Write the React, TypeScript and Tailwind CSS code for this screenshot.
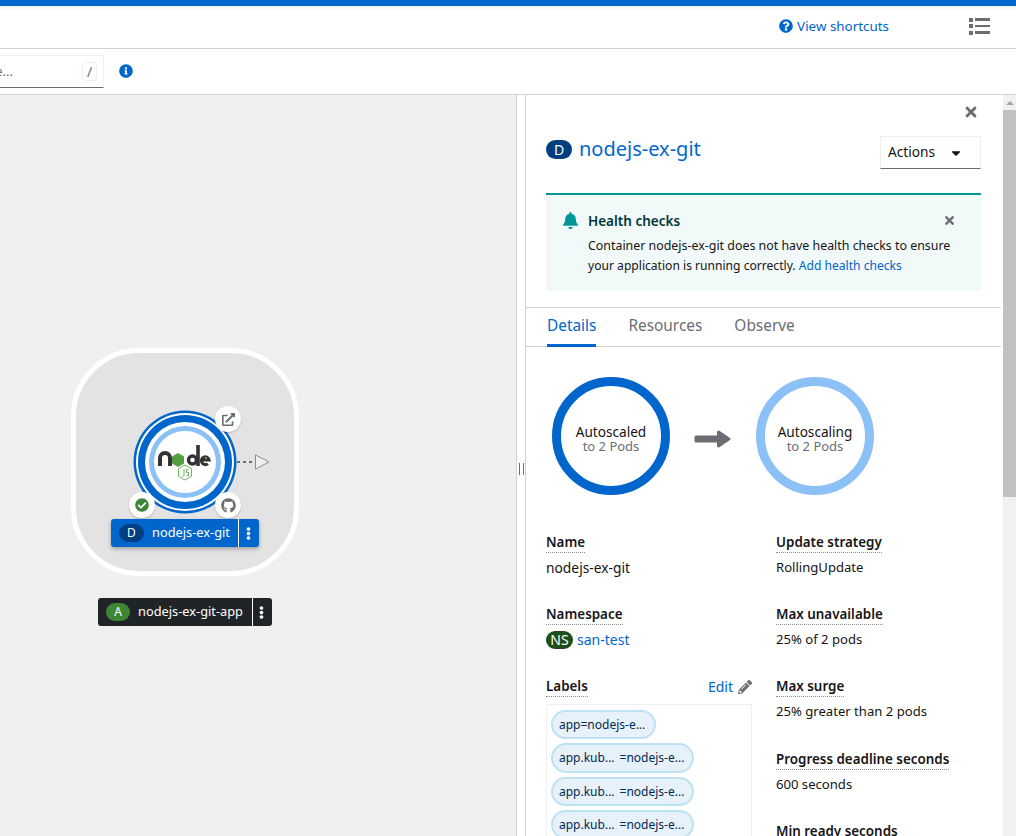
import { FaCheckCircle, FaExternalLinkAlt, FaGithub, FaInfoCircle, FaPencilAlt, FaQuestionCircle, FaTimes, FaBell, FaCaretDown, FaEllipsisV } from "react-icons/fa"

const font = "font-['Noto_Sans',sans-serif]"

const DotLabel = ({ children }: { children: string }) => (
  <div className="flex">
    <span className="text-[13.4px] leading-[19px] font-semibold text-[#151515] border-b border-dotted border-[#8a8d90]">{children}</span>
  </div>
)

const Field = ({ label, value, className, size }: { label: string; value: string; className: string; size: string }) => (
  <div className={className}>
    <DotLabel>{label}</DotLabel>
    <div className={`mt-[4px] leading-[21px] text-[#151515] ${size}`}>{value}</div>
  </div>
)

const Donut = ({ color, title, sub }: { color: string; title: string; sub: string }) => (
  <div className={`w-[118px] h-[118px] rounded-full border-[9px] ${color} flex flex-col items-center justify-center pt-[5px]`}>
    <div className="text-[13.6px] leading-[14px] text-[#151515]">{title}</div>
    <div className="text-[13px] leading-[14px] text-[#6a6e73]">{sub}</div>
  </div>
)

const Chip = ({ parts, className }: { parts: string[]; className: string }) => (
  <div className={`flex items-center gap-[5px] whitespace-nowrap rounded-full border-2 border-[#bee1f4] bg-[#e7f1fa] px-[6px] text-[12px] text-[#002952] ${className}`}>
    {parts.map((p) => <span key={p}>{p}</span>)}
  </div>
)

// node logo + rings, drawn once
const NodeIcon = () => (
  <svg width="108" height="108" viewBox="0 0 108 108">
    <circle cx="54" cy="54" r="51.5" fill="#06c" />
    <circle cx="54" cy="54" r="49" fill="#fff" />
    <circle cx="54" cy="54" r="47" fill="#06c" />
    <circle cx="54" cy="54" r="40" fill="#fff" />
    <circle cx="54" cy="54" r="36" fill="#8bc1f7" />
    <circle cx="54" cy="54" r="31" fill="#fff" />
    <path d="M29 58v-8a5 5 0 0 1 10 0v8" fill="none" stroke="#333" strokeWidth="4" />
    <polygon points="47,45 53,48.5 53,55.5 47,59 41,55.5 41,48.5" fill="#539e43" />
    <path d="M67 37v21" stroke="#333" strokeWidth="3.6" />
    <circle cx="61.5" cy="52" r="4" fill="none" stroke="#333" strokeWidth="3.4" />
    <path d="M71.5 52h6.5a3.8 3.8 0 1 0-1.2 3.6" fill="none" stroke="#333" strokeWidth="3.2" />
    <circle cx="75" cy="50" r="1.2" fill="#539e43" />
    <polygon points="54,57 60.5,60.7 60.5,68.3 54,72 47.5,68.3 47.5,60.7" fill="none" stroke="#6cb35f" strokeWidth="1" />
    <path d="M53 61v6.5l-1.5 1M57.5 61.5h-2v3h2v3h-2" fill="none" stroke="#6cb35f" strokeWidth="1" />
  </svg>
)

const Badge = ({ children, className }: { children: React.ReactNode; className: string }) => (
  <div className={`absolute w-[26px] h-[26px] rounded-full bg-white shadow-[0_1px_2px_rgba(0,0,0,0.2)] flex items-center justify-center ${className}`}>
    {children}
  </div>
)

export default function App() {
  return (
    <div className={`w-[1016px] h-[836px] overflow-hidden flex flex-col bg-white ${font}`}>
      <div className="h-[6px] bg-[#06c] shrink-0" />
      <div className="h-[43px] shrink-0 border-b border-[#d2d2d2] flex items-center justify-end pr-[26px] pb-[2px] shadow-[inset_0_4px_4px_-4px_rgba(0,0,0,0.15)]">
        <FaQuestionCircle className="text-[#06c] text-[14px] mr-[4px]" />
        <span className="text-[13.4px] text-[#06c] mr-[80px] mt-[1px]">View shortcuts</span>
        <div className="grid grid-cols-[4px_15px] gap-x-[2px] gap-y-[2.5px] w-[21px]">
          <div className="h-[4px] bg-[#6a6e73]" /><div className="h-[2.5px] self-center bg-[#6a6e73]" />
          <div className="h-[4px] bg-[#6a6e73]" /><div className="h-[2.5px] self-center bg-[#6a6e73]" />
          <div className="h-[4px] bg-[#6a6e73]" /><div className="h-[2.5px] self-center bg-[#6a6e73]" />
        </div>
      </div>
      <div className="h-[46px] shrink-0 border-b border-[#d2d2d2] flex items-center">
        <div className="w-[104px] h-[33px] border border-l-0 border-[#f0f0f0] border-b-[#6a6e73] flex items-center justify-end overflow-hidden pr-[6px]">
          <span className="text-[13px] text-[#6a6e73] whitespace-nowrap mr-[69px]">Find by name...</span>
          <span className="w-[15px] h-[19px] shrink-0 border border-[#f0f0f0] rounded-[3px] text-[14px] text-[#6a6e73] flex items-center justify-center">/</span>
        </div>
        <FaInfoCircle className="text-[#06c] text-[14px] ml-[15px] mb-[1px]" />
      </div>
      <div className="flex-1 flex min-h-0">
        {/* topology canvas */}
        <div className="relative w-[517px] bg-[#f0f0f0] border-r border-[#d2d2d2] shrink-0">
          <div className="absolute left-[71px] top-[253px] w-[228px] h-[228px] rounded-[68px] border-[5px] border-white bg-[#e3e3e3]" />
          <div className="absolute left-[131px] top-[313px]"><NodeIcon /></div>
          <svg className="absolute left-[236px] top-[355px]" width="36" height="24" viewBox="0 0 36 24">
            <path d="M1 12h18" stroke="#6a6e73" strokeWidth="2" strokeDasharray="3 3" />
            <polygon points="19.5,5 33,12 19.5,19" fill="#f0f0f0" stroke="#8a8d90" strokeWidth="1" />
          </svg>
          <Badge className="left-[215px] top-[311px]"><FaExternalLinkAlt className="text-[#6a6e73] text-[13px]" /></Badge>
          <Badge className="left-[129px] top-[397px]"><FaCheckCircle className="text-[#3e8635] text-[14px]" /></Badge>
          <Badge className="left-[215px] top-[397px]"><FaGithub className="text-[#6a6e73] text-[15px]" /></Badge>
          <div className="absolute left-[111px] top-[424px] w-[148px] h-[28px] rounded-[3px] bg-[#06c] shadow-[0_2px_4px_rgba(0,0,0,0.3)] flex items-center text-white">
            <span className="ml-[8px] w-[25px] h-[18px] rounded-full bg-[#004080] text-[12px] flex items-center justify-center">D</span>
            <span className="ml-[8px] text-[12.8px] whitespace-nowrap">nodejs-ex-git</span>
            <span className="ml-auto w-[21px] h-full border-l border-white flex items-center justify-center pr-[2px]"><FaEllipsisV className="text-[13px]" /></span>
          </div>
          <div className="absolute left-[98px] top-[503px] w-[174px] h-[28px] rounded-[3px] bg-[#212427] flex items-center text-white">
            <span className="ml-[8px] w-[24px] h-[18px] rounded-full bg-[#3e8635] text-[12px] flex items-center justify-center">A</span>
            <span className="ml-[8px] text-[12.8px] whitespace-nowrap">nodejs-ex-git-app</span>
            <span className="ml-auto w-[20px] h-full border-l border-white flex items-center justify-center pr-[3px]"><FaEllipsisV className="text-[13px]" /></span>
          </div>
        </div>
        {/* resize gutter */}
        <div className="w-[9px] shrink-0 border-r border-[#d2d2d2] flex items-center justify-center pt-[7px]">
          <div className="w-[5px] h-[12px] border-x border-[#6a6e73]" />
        </div>
        {/* side panel */}
        <div className="w-[475px] shrink-0 overflow-hidden">
          <div className="flex justify-end pt-[9px] pr-[22px]">
            <FaTimes className="text-[#6a6e73] text-[16px]" />
          </div>
          <div className="flex items-start justify-between px-[20px] mt-[16px]">
            <div className="flex items-center">
              <span className="w-[26px] h-[19px] rounded-full bg-[#004080] text-white text-[14px] flex items-center justify-center">D</span>
              <span className="ml-[7px] text-[20px] leading-[26px] text-[#06c]">nodejs-ex-git</span>
            </div>
            <div className="w-[101px] h-[33px] border border-[#f0f0f0] border-b-[#6a6e73] flex items-center justify-between pl-[7px] pr-[17px] text-[13.7px] text-[#151515]">
              Actions
              <FaCaretDown className="text-[14px]" />
            </div>
          </div>
          <div className="mx-[20px] mt-[24px] h-[98px] border-t-2 border-[#009596] bg-[#f2f9f9] flex pt-[16px] pl-[16px] pr-[25px]">
            <FaBell className="text-[#009596] text-[17px] mt-[1px] shrink-0" />
            <div className="ml-[9px] flex-1">
              <div className="flex items-center justify-between">
                <span className="text-[13.5px] leading-[21px] font-semibold text-[#003737]">Health checks</span>
                <FaTimes className="text-[#6a6e73] text-[13px] mb-[3px]" />
              </div>
              <p className="text-[12.4px] leading-[20px] text-[#151515] mt-[4px] whitespace-nowrap">Container nodejs-ex-git does not have health checks to ensure</p>
              <p className="text-[12.1px] leading-[20px] text-[#151515] whitespace-nowrap">your application is running correctly. <span className="text-[#06c]">Add health checks</span></p>
            </div>
          </div>
          <div className="mt-[16px] h-[40px] border-y border-[#d2d2d2] flex px-[21px] gap-[32px] text-[15.4px] text-[#6a6e73]">
            <div className="h-[39px] pb-[1px] flex items-center text-[#06c] border-b-[3px] border-[#06c]">Details</div>
            <div className="h-[39px] pb-[1px] flex items-center border-b-[3px] border-transparent">Resources</div>
            <div className="h-[39px] pb-[1px] flex items-center border-b-[3px] border-transparent">Observe</div>
          </div>
          <div className="flex items-center pl-[26px] mt-[30px]">
            <Donut color="border-[#06c]" title="Autoscaled" sub="to 2 Pods" />
            <svg className="mx-[24px] mt-[6px]" width="38" height="20" viewBox="0 0 38 20">
              <path d="M2 6.5h21V3a1.5 1.5 0 0 1 2.4-1.2L36 9a1.2 1.2 0 0 1 0 2l-10.6 7.2A1.5 1.5 0 0 1 23 17v-3.5H2a1.5 1.5 0 0 1-1.5-1.5V8A1.5 1.5 0 0 1 2 6.5z" fill="#6a6e73" />
            </svg>
            <Donut color="border-[#8bc1f7]" title="Autoscaling" sub="to 2 Pods" />
          </div>
          <div className="grid grid-cols-[206px_1fr] gap-x-[24px] px-[20px] mt-[38px]">
            <div>
              <Field label="Name" value="nodejs-ex-git" size="text-[13.8px]" className="h-[72px]" />
              <div className="h-[71px]">
                <DotLabel>Namespace</DotLabel>
                <div className="mt-[4px] flex items-center text-[14px] leading-[21px] text-[#06c]">
                  <span className="w-[27px] h-[18px] rounded-full bg-[#1e4f18] text-white text-[14px] flex items-center justify-center">NS</span>
                  <span className="ml-[4px]">san-test</span>
                </div>
              </div>
              <div className="flex items-center justify-between">
                <DotLabel>Labels</DotLabel>
                <span className="flex items-center gap-[5px] text-[14px] text-[#06c]">Edit <FaPencilAlt className="text-[#6a6e73] text-[14px]" /></span>
              </div>
              <div className="mt-[7px] border border-[#f0f0f0] pl-[4px] pt-[5px] flex flex-col items-start gap-[4px]">
                <Chip parts={["app=nodejs-e..."]} className="w-[105px] h-[29px]" />
                <Chip parts={["app.kub...", "=nodejs-e..."]} className="w-[143px] h-[30px]" />
                <Chip parts={["app.kub...", "=nodejs-e..."]} className="w-[143px] h-[29px]" />
                <Chip parts={["app.kub...", "=nodejs-e..."]} className="w-[143px] h-[29px]" />
              </div>
            </div>
            <div>
              <Field label="Update strategy" value="RollingUpdate" size="text-[13.1px]" className="h-[72px]" />
              <Field label="Max unavailable" value="25% of 2 pods" size="text-[13.1px]" className="h-[72px]" />
              <Field label="Max surge" value="25% greater than 2 pods" size="text-[13.1px]" className="h-[73px]" />
              <Field label="Progress deadline seconds" value="600 seconds" size="text-[13.1px]" className="h-[72px]" />
              <Field label="Min ready seconds" value="0 seconds" size="text-[13.1px]" className="h-[72px]" />
            </div>
          </div>
        </div>
        {/* scrollbar */}
        <div className="ml-[2px] flex-1 bg-[#f1f1f1] flex flex-col items-center">
          <div className="h-[15px] flex items-center"><div className="w-0 h-0 border-x-[4px] border-x-transparent border-b-[4px] border-b-[#a3a3a3]" /></div>
          <div className="w-full h-[387px] bg-[#c1c1c1]" />
        </div>
      </div>
    </div>
  )
}
